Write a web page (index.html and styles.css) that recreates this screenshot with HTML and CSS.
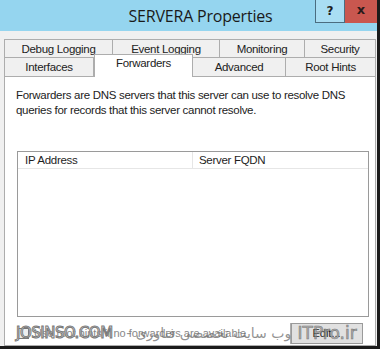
FILE: index.html
```html
<!DOCTYPE html>
<html lang="en">
<head>
  <meta charset="UTF-8" />
  <title>SERVERA Properties</title>
  <link rel="stylesheet" href="styles.css">
</head>
<body>
  <div class="window">
    <div class="titlebar">
      <div class="title">SERVERA Properties</div>
      <div class="help-btn">?</div>
      <div class="close-btn">x</div>
    </div>

    <div class="body">
      <div class="tab-row row-top">
        <div class="tab t-debug">Debug Logging</div>
        <div class="tab t-event">Event Logging</div>
        <div class="tab t-monitor">Monitoring</div>
        <div class="tab t-security">Security</div>
      </div>
      <div class="tab-row row-bottom">
        <div class="tab t-interfaces">Interfaces</div>
        <div class="tab t-forwarders active">Forwarders</div>
        <div class="tab t-advanced">Advanced</div>
        <div class="tab t-roothints">Root Hints</div>
      </div>

      <div class="panel">
        <p class="intro">Forwarders are DNS servers that this server can use to resolve DNS<br>queries for records that this server cannot resolve.</p>

        <div class="listbox">
          <div class="list-head">
            <div class="col col-ip">IP Address</div>
            <div class="col col-fqdn">Server FQDN</div>
          </div>
        </div>

        <div class="footer">
          <label class="check"><span class="box"></span>Use root hints if no forwarders are available</label>
          <button class="edit-btn">Edit...</button>
          <!-- watermark over the footer -->
          <div class="watermark">
            <span class="wm-site">JOSINSO.COM</span>
            <span class="wm-fa" dir="rtl">وب سایت تخصصی فناوری -</span>
            <span class="wm-itpro">ITPro.ir</span>
          </div>
        </div>
      </div>
    </div>
  </div>
</body>
</html>
```

FILE: styles.css
```css
* {
  margin: 0;
  padding: 0;
  box-sizing: border-box;
}

body {
  width: 380px;
  height: 349px;
  overflow: hidden;
  background: #1b1b1b;
  font-family: 'Liberation Sans', Arial, sans-serif;
  color: #1e1e1e;
}

.window {
  width: 377px;
  height: 346px;
  background: #f0f0f0;
  display: flex;
  flex-direction: column;
  overflow: hidden;
}

.titlebar {
  flex-shrink: 0;
  height: 31px;
  background: #95d5ef;
  display: flex;
  align-items: flex-start;
}

.title {
  flex: 1;
  text-align: center;
  padding-left: 88px;
  padding-top: 5px;
  font-family: 'Open Sans', sans-serif;
  font-size: 16px;
  letter-spacing: -0.2px;
  color: #1a1a1a;
}

.help-btn {
  width: 30px;
  height: 23px;
  margin-left: 2px;
  background: #a9def3;
  border: 1px solid #4b6d80;
  border-top: none;
  text-align: center;
  font-family: 'DejaVu Sans', sans-serif;
  font-weight: bold;
  font-size: 12px;
  line-height: 22px;
}

.close-btn {
  width: 32px;
  height: 23px;
  background: #c9574f;
  text-align: center;
  font-family: 'DejaVu Sans', sans-serif;
  font-weight: bold;
  font-size: 13px;
  line-height: 20px;
  color: #2a1a1a;
}

.body {
  flex: 1;
  min-height: 0;
  padding: 8px 0 0 4px;
  display: flex;
  flex-direction: column;
}

.tab-row {
  flex-shrink: 0;
  display: flex;
}

.row-top {
  height: 18px;
}

.row-bottom {
  height: 19px;
  position: relative;
  z-index: 1;
}

.tab {
  background: #f0f0f0;
  border: 1px solid #adadad;
  border-bottom: none;
  text-align: center;
  white-space: nowrap;
  font-size: 11.5px;
  line-height: 18px;
  letter-spacing: -0.3px;
  color: #222;
}

.tab + .tab {
  border-left: none;
}

.t-debug { width: 109px; }
.t-event { width: 107px; }
.t-monitor { width: 85px; }
.t-security { width: 71px; }

.t-interfaces { width: 90px; }
.t-forwarders { width: 99px; }
.t-advanced { width: 93px; }
.t-roothints { width: 90px; }

.tab.active {
  background: #fff;
  border-left: 1px solid #adadad;
  border-right: 1px solid #adadad;
  height: 23px;
  margin-top: -3px;
  line-height: 17px;
}

.t-advanced {
  border-left: none;
}

.panel {
  width: 372px;
  flex: 1;
  min-height: 0;
  background: #fff;
  border: 1px solid #adadad;
  padding: 11px 11px 0 11px;
  display: flex;
  flex-direction: column;
}

.intro {
  flex-shrink: 0;
  white-space: nowrap;
  font-size: 11.5px;
  line-height: 15px;
  letter-spacing: -0.3px;
  color: #222;
}

.listbox {
  flex-shrink: 0;
  margin: 33px 0 0 1px;
  width: 352px;
  height: 166px;
  border: 1px solid #9a9a9a;
}

.list-head {
  display: flex;
  height: 17px;
  border-bottom: 1px solid #e6e6e6;
  font-size: 11.5px;
  line-height: 17px;
  letter-spacing: -0.3px;
}

.col-ip {
  width: 175px;
  padding-left: 7px;
  border-right: 1px solid #e6e6e6;
}

.col-fqdn {
  padding-left: 6px;
}

.footer {
  flex-shrink: 0;
  position: relative;
  display: flex;
  align-items: center;
  justify-content: space-between;
  height: 24px;
  margin-top: 4px;
  padding-left: 2px;
}

.check {
  display: flex;
  align-items: center;
  gap: 5px;
  white-space: nowrap;
  font-size: 11px;
  color: #888;
}

.box {
  width: 11px;
  height: 11px;
  border: 1px solid #777;
  background: #eee;
}

.edit-btn {
  width: 73px;
  height: 21px;
  margin-right: 1px;
  background: #e1e1e1;
  border: 1px solid #adadad;
  font-family: inherit;
  font-size: 11px;
  color: #222;
}

.watermark {
  position: absolute;
  inset: 0;
  display: flex;
  align-items: center;
  pointer-events: none;
}

.wm-site {
  font-family: 'DejaVu Sans', sans-serif;
  font-size: 15px;
  letter-spacing: -0.5px;
  color: rgba(240, 240, 240, 0.8);
  -webkit-text-stroke: 1px #7a7a7a;
  width: 100px;
  white-space: nowrap;
}

.wm-fa {
  font-family: 'DejaVu Sans', sans-serif;
  font-size: 14px;
  color: rgba(110, 110, 110, 0.75);
  width: 180px;
  text-align: right;
  white-space: nowrap;
}

.wm-itpro {
  margin-left: auto;
  margin-right: 1px;
  width: 73px;
  height: 21px;
  border: 1px solid #9a9a9a;
  font-family: 'DejaVu Sans', sans-serif;
  font-size: 17px;
  line-height: 19px;
  text-align: center;
  color: rgba(140, 140, 140, 0.6);
  -webkit-text-stroke: 0.6px #7a7a7a;
}
```
